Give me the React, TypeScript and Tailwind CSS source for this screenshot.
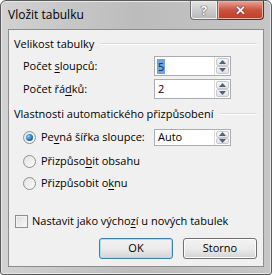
import React from "react";

const font = { fontFamily: '"Open Sans", "Noto Sans", sans-serif' };

function U({ children }: { children: React.ReactNode }) {
  return <span className="underline underline-offset-[2px] decoration-1">{children}</span>;
}

function SpinButtons() {
  return (
    <div className="flex flex-col w-[16px] h-full border-l border-[#dcdcdc]">
      <div className="flex-1 flex items-center justify-center bg-gradient-to-b from-[#f7f7f7] to-[#e4e4e4] border border-[#c9c9c9] rounded-[2px] m-[1px] mb-0">
        <svg width="7" height="4" viewBox="0 0 7 4"><path d="M0 4 L3.5 0 L7 4 Z" fill="#4d6185" /></svg>
      </div>
      <div className="flex-1 flex items-center justify-center bg-gradient-to-b from-[#f2f2f2] to-[#e2e2e2] border border-[#c9c9c9] rounded-[2px] m-[1px] mt-0">
        <svg width="7" height="4" viewBox="0 0 7 4"><path d="M0 0 L7 0 L3.5 4 Z" fill="#4d6185" /></svg>
      </div>
    </div>
  );
}

function Spinner({ value, selected, h = 20 }: { value: string; selected?: boolean; h?: number }) {
  return (
    <div className="flex w-[77px] border border-[#abadb3] bg-white" style={{ height: h }}>
      <div className="flex-1 flex items-center pl-[2px]">
        {selected ? (
          <span className="bg-[#6fa3e2] text-[#0d2c5c] px-[1px] leading-[15px]">{value}</span>
        ) : (
          <span className="text-black pl-[1px]">{value}</span>
        )}
      </div>
      <SpinButtons />
    </div>
  );
}

function Radio({ checked }: { checked?: boolean }) {
  return (
    <div className="w-[13px] h-[13px] shrink-0 rounded-full border border-[#8e8f8f] bg-gradient-to-br from-[#e2e2e2] to-[#fbfbfb] flex items-center justify-center">
      {checked && (
        <div className="w-[7px] h-[7px] rounded-full bg-[radial-gradient(circle_at_35%_35%,#8ad0f5,#1e6bb8_60%,#0c3f7c)]" />
      )}
    </div>
  );
}

function GroupHeader({ text }: { text: string }) {
  return (
    <div className="flex items-center h-[16px] pl-[5px] pr-[6px]">
      <span className="whitespace-nowrap">{text}</span>
      <div className="flex-1 ml-[6px] border-t border-[#dcdcdc] border-b-white border-b" />
    </div>
  );
}

function Btn({ children, def }: { children: React.ReactNode; def?: boolean }) {
  return (
    <div
      className={`w-[74px] h-[21px] rounded-[3px] border flex items-center justify-center bg-gradient-to-b from-[#f2f2f2] via-[#ebebeb] to-[#d4d4d4] ${
        def ? "border-[#3c7fb1] shadow-[inset_0_0_0_1px_#a6e0f8]" : "border-[#707070] shadow-[inset_0_0_0_1px_#fcfcfc]"
      }`}
    >
      {children}
    </div>
  );
}

export default function App() {
  return (
    <div className="w-[272px] h-[275px] bg-white" style={font}>
      <div className="w-[272px] h-[275px] rounded-t-[6px] rounded-b-[3px] border border-[#5a5a5a] bg-gradient-to-r from-[#d2d2d2] via-[#bcbcbc] to-[#c6c6c6] shadow-[inset_0_0_0_1px_#e8e8e8] flex flex-col text-[11px] text-black whitespace-nowrap">
        <div className="h-[28px] flex items-start justify-between pl-[7px] pr-[7px]">
          <div className="pt-[6px] text-[12px] text-black leading-[16px]">Vložit tabulku</div>
          <div className="flex h-[19px]">
            <div className="w-[28px] h-[19px] rounded-bl-[4px] border border-t-0 border-[#6f6f6f] bg-gradient-to-b from-[#e4e4e4] via-[#cdcdcd] to-[#b6b6b6] shadow-[inset_0_0_0_1px_#f0f0f0] flex items-center justify-center">
              <span className="text-white font-bold text-[13px] leading-none [text-shadow:0_0_1px_#333,0_0_1px_#333]">?</span>
            </div>
            <div className="w-[46px] h-[19px] rounded-br-[4px] border border-l-0 border-t-0 border-[#6a2a20] bg-gradient-to-b from-[#e8a596] via-[#c9533d] to-[#c23a22] shadow-[inset_0_0_0_1px_#e7b2a6] flex items-center justify-center">
              <span className="text-white font-bold text-[13px] leading-none [text-shadow:0_0_1px_#3a0d05,0_0_1px_#3a0d05]">✕</span>
            </div>
          </div>
        </div>
        <div className="mx-[7px] h-[238px] border border-[#8c8c8c] bg-[#f0f0f0] flex flex-col">
          <div className="pt-[6px]">
            <GroupHeader text="Velikost tabulky" />
          </div>
          <div className="mt-[4px] flex items-center h-[20px] pl-[14px]">
            <span className="w-[131px]">
              Počet <U>s</U>loupců:
            </span>
            <Spinner value="5" selected />
          </div>
          <div className="mt-[3px] flex items-center h-[20px] pl-[14px]">
            <span className="w-[131px]">
              Počet řá<U>d</U>ků:
            </span>
            <Spinner value="2" />
          </div>
          <div className="mt-[7px]">
            <GroupHeader text="Vlastnosti automatického přizpůsobení" />
          </div>
          <div className="mt-[7px] flex items-center h-[17px] pl-[14px]">
            <Radio checked />
            <span className="ml-[5px] w-[113px]">
              Pe<U>v</U>ná šířka sloupce:
            </span>
            <Spinner value="Auto" h={17} />
          </div>
          <div className="mt-[7px] flex items-center h-[17px] pl-[14px]">
            <Radio />
            <span className="ml-[5px]">
              Přizpůso<U>b</U>it obsahu
            </span>
          </div>
          <div className="mt-[5px] flex items-center h-[17px] pl-[14px]">
            <Radio />
            <span className="ml-[5px]">
              Přizpůsobit o<U>k</U>nu
            </span>
          </div>
          <div className="mt-[21px] flex items-center h-[17px] pl-[6px]">
            <div className="w-[13px] h-[13px] border border-[#8e8f8f] bg-gradient-to-br from-[#dcdcdc] to-[#fafafa] shadow-[inset_0_0_0_1px_#f4f4f4]" />
            <span className="ml-[4px]">
              Nastavit jako výcho<U>z</U>í u nových tabulek
            </span>
          </div>
          <div className="mt-[8px] flex justify-end gap-[10px] pr-[6px]">
            <Btn def>OK</Btn>
            <Btn>Storno</Btn>
          </div>
        </div>
      </div>
    </div>
  );
}
